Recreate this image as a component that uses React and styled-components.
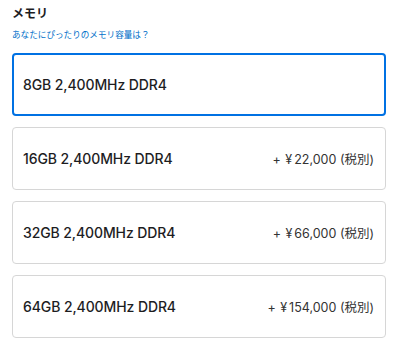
import React from "react";
import styled, { createGlobalStyle } from "styled-components";

const GlobalStyle = createGlobalStyle`
  body {
    margin: 0;
    background: #fff;
    font-family: Inter, "Noto Sans CJK JP", sans-serif;
    color: #1d1d1f;
  }
`;

const Section = styled.div`
  padding: 6px 13px 0 12px;
`;

const Title = styled.h2`
  margin: 0;
  font-size: 12px;
  font-weight: 700;
  line-height: 16px;
`;

const HelpLink = styled.a`
  display: block;
  margin-top: 6px;
  font-size: 8.6px;
  line-height: 14px;
  color: #0070c9;
  text-decoration: none;
`;

const Options = styled.div`
  display: flex;
  flex-direction: column;
  gap: 11px;
  margin-top: 11px;
`;

const Option = styled.label`
  display: flex;
  align-items: center;
  justify-content: space-between;
  height: 63px;
  box-sizing: border-box;
  padding: 0 11px 0 ${(p) => (p.$selected ? 9 : 10)}px;
  border: ${(p) => (p.$selected ? "2px solid #0071e3" : "1px solid #d6d6d6")};
  border-radius: 4px;
  cursor: pointer;
`;

const Name = styled.span`
  font-size: 14px;
  font-weight: 500;
  letter-spacing: -0.1px;
`;

const Price = styled.span`
  font-size: 12.5px;
  color: #333;
`;

const Yen = styled.span`
  margin: 0 2px 0 1px;
`;

const options = [
  { name: "8GB 2,400MHz DDR4", price: null, selected: true },
  { name: "16GB 2,400MHz DDR4", price: "22,000" },
  { name: "32GB 2,400MHz DDR4", price: "66,000" },
  { name: "64GB 2,400MHz DDR4", price: "154,000" },
];

const App = () => {
  return (
    <>
      <GlobalStyle />
      <Section>
        <Title>メモリ</Title>
        <HelpLink href="#">あなたにぴったりのメモリ容量は？</HelpLink>
        <Options>
          {options.map((o) => (
            <Option key={o.name} $selected={o.selected}>
              <Name>{o.name}</Name>
              {o.price && (
                <Price>
                  +<Yen> ¥</Yen>
                  {o.price} (税別)
                </Price>
              )}
            </Option>
          ))}
        </Options>
      </Section>
    </>
  );
};

export default App;
